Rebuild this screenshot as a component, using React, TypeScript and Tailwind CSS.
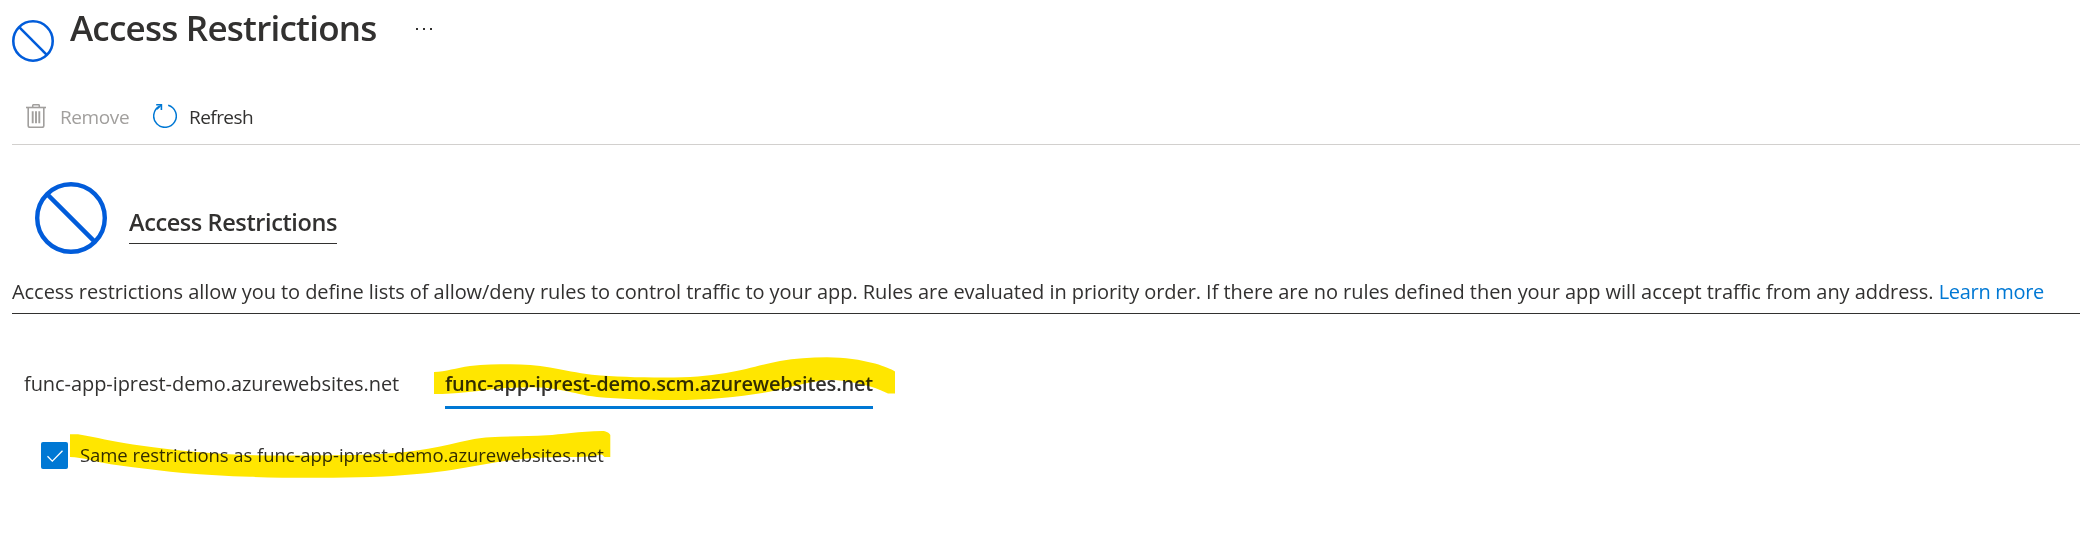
function BlockedIcon({ className, stroke }: { className: string; stroke: number }) {
  const r = 36 - stroke / 2;
  const d = r * 0.7;
  return (
    <svg viewBox="0 0 72 72" className={className} fill="none" stroke="#015cda" strokeWidth={stroke}>
      <circle cx="36" cy="36" r={r} />
      <path d={`M${36 - d} ${36 - d}L${36 + d} ${36 + d}`} />
    </svg>
  );
}

function TrashIcon() {
  return (
    <svg viewBox="0 0 20 24" className="h-6 w-5 shrink-0" fill="none" stroke="#a19f9d">
      <path d="M0 3.5h20" strokeWidth="1.6" />
      <path d="M6.7 3.5V1.6q0-.9.9-.9h4.8q.9 0 .9.9v1.9" strokeWidth="1.5" />
      <path d="M2.2 3.5v18.2q0 1.6 1.6 1.6h12.4q1.6 0 1.6-1.6V3.5" strokeWidth="1.6" />
      <path d="M6.7 7.3v12M10 7.3v12M13.3 7.3v12" strokeWidth="1.9" />
    </svg>
  );
}

function RefreshIcon() {
  return (
    <svg viewBox="0 0 24 24" className="h-6 w-6 shrink-0" fill="none" stroke="#0078d4">
      <path d="M15.2 1.2A11.3 11.3 0 1 1 6.6 2.1" strokeWidth="1.5" />
      <path d="M3.2 .8H8.4V6" strokeWidth="1.6" />
      <path d="M8.2 1L4 5.2" strokeWidth="1.5" />
    </svg>
  );
}

function TabMarker() {
  return (
    <svg viewBox="434 356 462 46" className="pointer-events-none absolute -left-[11px] -top-[14px] h-[46px] w-[462px] max-w-none mix-blend-multiply">
      <path
        fill="#ffe600"
        d="M434 372C446 371.5 456 368 470 366C484 364.5 497 364.3 510 364.3C524 364.3 537 365.5 550 367.5C565 370 577 373 592 374.8C615 376.6 635 377.6 665 377.6C690 377.5 707 376 726 373C747 369.5 761 364.8 780 361C795 358.3 810 357.2 827 357.2C845 357.3 860 359.5 875 363.5C885 366.5 891 369 895 371.5V393.5H888C878 388.5 866 384.5 850 382C840 380 834 379.8 827 380C805 382.5 788 388 768 392C740 396.5 710 400 673 400C645 400 620 399 597 397C584 395.5 574 392.5 563 390.5C552 388 542 387.3 533 387.3C520 387.3 508 387.6 495 389C476 391.3 457 394 434 394Z"
      />
    </svg>
  );
}

function OptionMarker() {
  return (
    <svg viewBox="70 430 542 50" className="pointer-events-none absolute -left-[10px] -top-[11px] h-[50px] w-[542px] max-w-none mix-blend-multiply">
      <path
        fill="#ffe600"
        d="M70 434.3H78C97 437.5 112 441.5 133 444.5C160 448.5 187 451.8 213 453.3C237 455 260 455.5 283 455.5C315 455.5 347 455.5 377 454.3C392 453.5 405 452.3 417 450.5C432 448.3 446 445.3 460 442C470 439.8 478 438 490 437.3C510 436 530 436.2 547 435.3C560 434.5 580 431.5 602 431C606 431 609.5 433 610.3 435V457H604.5L602 454.5C588 458 570 456.5 553 457.3C540 457.7 528 458.3 517 459.5C497 461.5 475 466.5 453 469.8C442 471.6 431 472.8 420 473.7C408 474.7 396 476 383 476.6C367 477.4 350 477.7 333 477.7C305 477.9 277 477.8 250 476.8C227 476 205 475 183 473C166 471.5 150 469.5 133 467.3C118 465.3 103 463.5 90 460C83 458.3 76 457.3 70 457Z"
      />
    </svg>
  );
}

export default function App() {
  return (
    <main className="flex h-[538px] w-full flex-col overflow-hidden bg-white pl-3 font-['Open_Sans',sans-serif] text-[#323130]">
      <header className="flex h-[88px] items-start">
        <BlockedIcon className="mt-5 h-[42px] w-[42px] shrink-0" stroke={4.4} />
        <h1 className="ml-[16px] mt-2 w-[309px] whitespace-nowrap text-[35px] font-semibold leading-[40px] tracking-[-0.77px]">
          Access Restrictions
        </h1>
        <button aria-label="More" className="ml-[37px] mt-7 flex gap-[5px]">
          <span className="h-[2px] w-[2px] bg-[#323130]" />
          <span className="h-[2px] w-[2px] bg-[#323130]" />
          <span className="h-[2px] w-[2px] bg-[#323130]" />
        </button>
      </header>

      <div className="flex h-[57px] items-center border-b border-[#d2d0ce] pl-[14px] text-[19px] leading-6">
        <button className="flex w-[127px] items-center gap-[14px] text-[#a19f9d]">
          <TrashIcon />
          <span className="pt-[2px] tracking-[-0.4px]">Remove</span>
        </button>
        <button className="flex items-center gap-3">
          <RefreshIcon />
          <span className="pt-[2px] tracking-[-0.55px]">Refresh</span>
        </button>
      </div>

      <section className="flex h-[169px] w-full flex-col border-b border-[#323130] pt-[37px]">
        <div className="flex items-start pl-[23px]">
          <BlockedIcon className="h-[72px] w-[72px] shrink-0" stroke={4.4} />
          <h2 className="ml-[22px] mt-6 h-[38px] w-[208px] whitespace-nowrap border-b border-[#323130] text-[23.5px] font-semibold leading-[32px] tracking-[-0.4px]">
            Access Restrictions
          </h2>
        </div>
        <p className="mt-6 whitespace-nowrap text-[20px] leading-[28px] tracking-[-0.06px]">
          Access restrictions allow you to define lists of allow/deny rules to control traffic to your app. Rules are
          evaluated in priority order. If there are no rules defined then your app will accept traffic from any address.{" "}
          <a className="tracking-[-0.3px] text-[#0078d4]">Learn more</a>
        </p>
      </section>

      <nav className="mt-[56px] flex h-[39px] items-start pl-3 text-[20px] leading-[28px]">
        <button className="w-[421px] whitespace-nowrap text-left tracking-[-0.07px]">
          func-app-iprest-demo.azurewebsites.net
        </button>
        <button className="relative h-[39px] w-[428px] whitespace-nowrap border-b-[3px] border-[#0078d4] pb-2 text-left font-semibold tracking-[-0.18px]">
          func-app-iprest-demo.scm.azurewebsites.net
          <TabMarker />
        </button>
      </nav>

      <label className="mt-8 flex h-[28px] items-start pl-[29px]">
        <span className="mt-px flex h-[27px] w-[27px] items-center justify-center rounded-[2px] bg-[#0078d4]">
          <svg viewBox="0 0 16 12" className="h-3 w-4" fill="none" stroke="white" strokeWidth="1.3">
            <path d="M.5 6.3l4.8 4.8L15.5.8" />
          </svg>
        </span>
        <span className="relative ml-3 whitespace-nowrap text-[18.5px] leading-[28px] tracking-[-0.07px]">
          Same restrictions as func-app-iprest-demo.azurewebsites.net
          <OptionMarker />
        </span>
      </label>
    </main>
  );
}
